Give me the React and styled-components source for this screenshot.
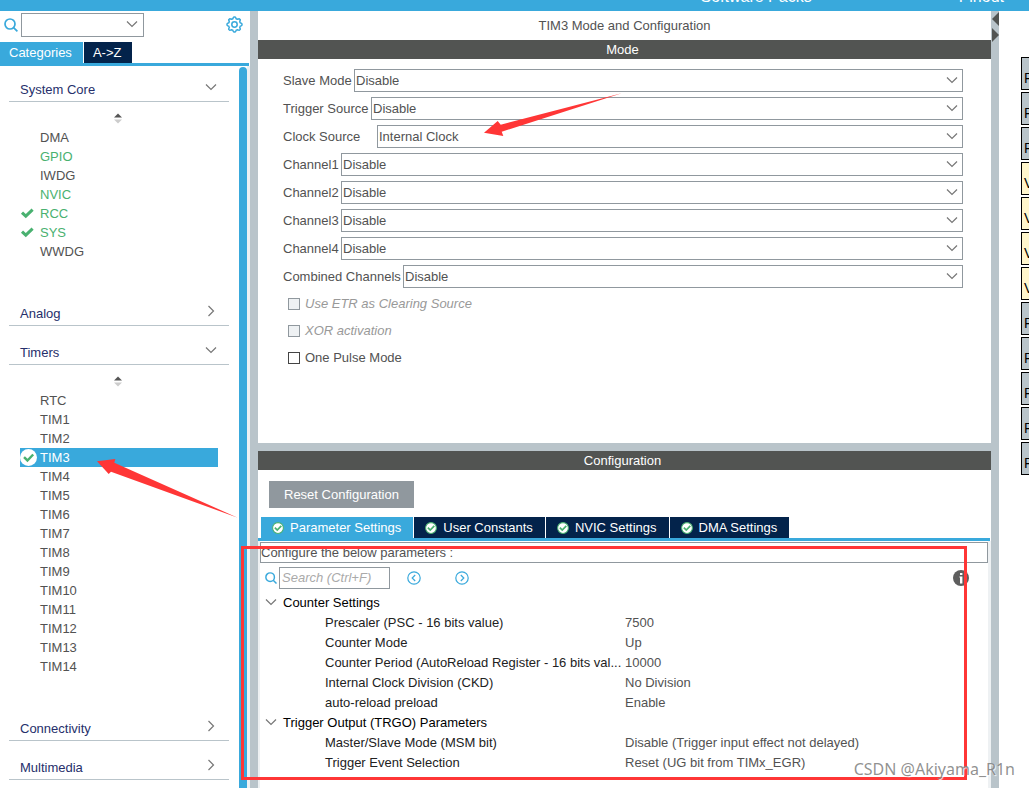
import React from 'react';
import styled, { createGlobalStyle, css, ThemeProvider } from 'styled-components';

const theme = {
  blue: '#39a9dc',
  navy: '#03234b',
  steel: '#b9c4ca',
  slate: '#90989e',
  dark: '#525452',
  text: '#525252',
  section: '#262f6b',
  green: '#49b170',
  pale: '#eef1f3',
  red: '#ff3636',
};

const GlobalStyle = createGlobalStyle`
  * {
    box-sizing: border-box;
  }

  body {
    margin: 0;
    background: #fff;
    color: ${theme.text};
    font: 13px/19px 'Liberation Sans', Arial, sans-serif;
  }

  button,
  input,
  select {
    font: inherit;
    color: inherit;
    margin: 0;
  }
`;

const Page = styled.div`
  position: relative;
  display: flex;
  flex-direction: column;
  height: 100vh;
  overflow: hidden;
`;

const ButtonReset = styled.button`
  border: 0;
  padding: 0;
  background: transparent;
  cursor: pointer;
  display: flex;
  align-items: center;
`;

const TopBar = styled.header`
  display: flex;
  flex: none;
  justify-content: flex-end;
  align-items: flex-end;
  gap: 127px;
  height: 11px;
  padding: 0 25px 4px 0;
  overflow: hidden;
  background: ${({ theme }) => theme.blue};
`;

const TopMenu = styled(ButtonReset)`
  gap: 10px;
  color: #fff;
  font-size: 16px;
  line-height: 20px;
`;

const Workspace = styled.div`
  display: flex;
  flex: 1;
  min-height: 0;
`;

const Sidebar = styled.aside`
  display: flex;
  flex-direction: column;
  flex: none;
  width: 250px;
`;

const Finder = styled.div`
  display: flex;
  align-items: center;
  height: 31px;
  padding: 0 7px 4px 4px;
  gap: 3px;

  > :last-child {
    margin-left: auto;
  }
`;

const TabList = styled.div`
  display: flex;
  gap: 1px;
  border-bottom: 3px solid ${({ theme }) => theme.blue};
  margin-right: 1px;
  padding-left: ${({ $indent }) => $indent || 0}px;
`;

const Tab = styled(ButtonReset)`
  height: 21px;
  gap: 6px;
  padding: ${({ $wide }) => ($wide ? '0 12px 0 11px' : '0 11px 0 9px')};
  color: #fff;
  background: ${({ theme, $active }) => ($active ? theme.blue : theme.navy)};
`;

const SidebarBody = styled.div`
  display: flex;
  flex: 1;
  min-height: 0;
  background: #fff;
`;

const Nav = styled.nav`
  display: flex;
  flex-direction: column;
  flex: 1;
  gap: 3px;
  overflow: hidden;
`;

const ScrollThumb = styled.div`
  width: 8px;
  margin-top: 1px;
  border-radius: 4px 4px 0 0;
  background: ${({ theme }) => theme.blue};
`;

const ScrollEdge = styled.div`
  width: 3px;
  background: ${({ theme }) => theme.pale};
`;

const SectionHeader = styled(ButtonReset)`
  justify-content: space-between;
  width: 220px;
  height: 36px;
  margin-left: 9px;
  padding: 12px 12px 0 11px;
  border-bottom: 1px solid ${({ theme }) => theme.steel};
  color: ${({ theme }) => theme.section};

  svg {
    margin-bottom: 6px;
  }
`;

const Sorter = styled.div`
  display: flex;
  justify-content: center;
  align-items: center;
  height: 26px;
  padding: 6px 3px 0 0;
`;

const List = styled.ul`
  list-style: none;
  margin: 0;
  padding: 0 21px 26px 20px;
`;

const Item = styled.li`
  display: flex;
  align-items: center;
  height: 19px;
  color: ${({ theme, $enabled }) => ($enabled ? theme.green : theme.text)};

  ${({ $selected, theme }) =>
    $selected &&
    css`
      color: #fff;
      background: ${theme.blue};
    `}
`;

const ItemMark = styled.span`
  display: flex;
  width: 20px;
`;

const Splitter = styled.div`
  flex: none;
  width: 8px;
  height: ${({ $horizontal }) => ($horizontal ? '8px' : 'auto')};
  background: ${({ theme }) => theme.steel};

  ${({ $horizontal }) =>
    $horizontal &&
    css`
      width: auto;
    `}

  svg {
    display: block;
  }
`;

const Main = styled.main`
  display: flex;
  flex-direction: column;
  flex: 1;
  min-width: 0;
`;

const Title = styled.h1`
  margin: 0;
  font-size: 13px;
  font-weight: 400;
  line-height: 29px;
  text-align: center;
`;

const PanelHeader = styled.h2`
  margin: 0;
  padding-right: 4px;
  font-size: 13px;
  font-weight: 400;
  line-height: 19px;
  text-align: center;
  color: #fff;
  background: ${({ theme }) => theme.dark};
`;

const ModeForm = styled.form`
  display: flex;
  flex-direction: column;
  gap: 5px;
  padding: 10px 28px 72px 25px;
`;

const ModeRow = styled.div`
  display: flex;
  align-items: center;
`;

const ModeLabel = styled.label`
  flex: none;
  width: ${({ $width }) => $width}px;
  white-space: nowrap;
`;

const SelectBox = styled.span`
  display: grid;
  flex: ${({ $width }) => ($width ? 'none' : 1)};
  width: ${({ $width }) => ($width ? `${$width}px` : 'auto')};
  align-items: center;

  > * {
    grid-area: 1 / 1;
  }

  svg {
    justify-self: end;
    margin-right: ${({ $width }) => ($width ? 6 : 5)}px;
    margin-bottom: 1px;
    pointer-events: none;
  }
`;

const Select = styled.select`
  appearance: none;
  width: 100%;
  height: ${({ $tall }) => ($tall ? 24 : 23)}px;
  padding: 0 20px 0 1px;
  border: 1px solid ${({ theme }) => theme.slate};
  border-radius: 0;
  background: #fff;
`;

const Checks = styled.div`
  display: flex;
  flex-direction: column;
  margin-top: -3px;
  padding-left: 5px;
`;

const Check = styled.label`
  display: flex;
  align-items: center;
  gap: 5px;
  height: 27px;

  ${({ $disabled }) =>
    $disabled &&
    css`
      color: #999;
      font-style: italic;
    `}

  input {
    appearance: none;
    width: 12px;
    height: 12px;
    border: 1px solid #444;
    background: #fff;
  }

  input:disabled {
    border-color: ${({ theme }) => theme.slate};
    background: ${({ theme }) => theme.pale};
  }
`;

const Actions = styled.div`
  display: flex;
  padding: 11px 11px 9px;
`;

const ResetButton = styled(ButtonReset)`
  height: 27px;
  padding: 0 15px;
  color: #fff;
  background: ${({ theme }) => theme.slate};
`;

const Config = styled.section`
  display: flex;
  flex-direction: column;
  flex: 1;
  min-height: 0;
`;

const Params = styled.div`
  flex: 1;
  padding-top: 1px;
  border: solid ${({ theme }) => theme.pale};
  border-width: 0 3px 0 2px;
`;

const Hint = styled.p`
  margin: 0;
  height: 21px;
  border: 1px solid ${({ theme }) => theme.slate};
`;

const Tools = styled.div`
  display: flex;
  align-items: center;
  height: 29px;
  padding: 0 19px 0 5px;
`;

const SearchInput = styled.input`
  width: 111px;
  height: 22px;
  margin: 0 17px 0 2px;
  padding: 0 2px;
  border: 1px solid ${({ theme }) => theme.slate};
  background: #fff;

  &::placeholder {
    color: #aaa;
    font-style: italic;
    opacity: 1;
  }
`;

const Stepper = styled.div`
  display: flex;
  gap: 34px;
  margin-right: auto;
`;

const ParamTable = styled.table`
  width: 100%;
  table-layout: fixed;
  border-collapse: collapse;

  th,
  td {
    height: 20px;
    padding: 0;
    font-weight: 400;
    text-align: left;
    white-space: nowrap;
  }
`;

const NameColumn = styled.col`
  width: 365px;
`;

const GroupButton = styled(ButtonReset)`
  gap: 6px;
  padding-left: 5px;
  color: #000;
`;

const ParamName = styled.span`
  padding-left: 65px;
  color: #222;
`;

const PinView = styled.div`
  flex: none;
  width: 30px;
  padding: 46px 0 0 22px;
  overflow: hidden;
`;

const Pin = styled.div`
  display: flex;
  align-items: flex-end;
  width: 60px;
  height: 33px;
  margin-bottom: 2px;
  padding: 0 0 3px 2px;
  border: 1px solid #000;
  color: #000;
  font-size: 14px;
  line-height: 16px;
  background: ${({ theme, $power }) => ($power ? '#fff6cc' : theme.steel)};
`;

/* Markup drawn over the window */
const Callout = styled.div`
  position: absolute;
  left: 241px;
  top: 546px;
  width: 726px;
  height: 234px;
  border: 3px solid ${({ theme }) => theme.red};
  pointer-events: none;
`;

const Arrows = styled.svg`
  position: absolute;
  left: 0;
  top: 0;
  fill: ${({ theme }) => theme.red};
  pointer-events: none;
`;

const Watermark = styled.div`
  position: absolute;
  right: 14px;
  bottom: 8px;
  font: 16px/22px 'Noto Sans', 'Open Sans', sans-serif;
  color: rgba(125, 125, 125, 0.85);
  text-shadow: 1px 1px 1px rgba(255, 255, 255, 0.9);
  pointer-events: none;
`;

const Chevron = ({ right, color = '#777', size = 12 }) => (
  <svg width={size} height={size} viewBox="0 0 12 12" fill="none" stroke={color} strokeWidth="1.2">
    <path d={right ? 'M3.5 1L8.5 6L3.5 11' : 'M1 3.5L6 8.5L11 3.5'} />
  </svg>
);

const SearchIcon = ({ size }) => (
  <svg width={size} height={size} viewBox="0 0 14 14" fill="none" stroke={theme.blue} strokeWidth="1.7">
    <circle cx="6" cy="6" r="5" />
    <path d="M9.6 9.6L13.4 13.4" />
  </svg>
);

const gearPoints = Array.from({ length: 64 }, (_, i) => {
  const angle = (i / 64) * Math.PI * 2;
  const radius = 6.7 + 0.8 * Math.tanh(3 * Math.cos(angle * 8));
  return `${(8.5 + radius * Math.cos(angle)).toFixed(2)},${(8.5 + radius * Math.sin(angle)).toFixed(2)}`;
}).join(' ');

const GearIcon = () => (
  <svg width="17" height="17" viewBox="0 0 17 17" fill="none" stroke={theme.blue} strokeWidth="1.5">
    <polygon points={gearPoints} strokeLinejoin="round" />
    <circle cx="8.5" cy="8.5" r="2.7" />
  </svg>
);

const SortIcon = () => (
  <svg width="8" height="11" viewBox="0 0 8 11">
    <path d="M0 4.5L4 0.5L8 4.5Z" fill="#555" />
    <path d="M0 6.5L4 10.5L8 6.5Z" fill="#ccc" />
  </svg>
);

const TickIcon = () => (
  <svg width="14" height="11" viewBox="0 0 14 11" fill="none" stroke={theme.green} strokeWidth="3">
    <path d="M2 4.6L5.8 8.2L12.6 1.6" />
  </svg>
);

const TickBadge = ({ size, ring }) => (
  <svg width={size} height={size} viewBox="0 0 16 16" fill="none" stroke={theme.green}>
    <circle cx="8" cy="8" r={ring ? 7.2 : 8} fill="#fff" strokeWidth={ring ? 1.4 : 0} />
    <path d="M3.8 7.6L7 10.8L12.4 5.2" strokeWidth="2.3" />
  </svg>
);

const StepIcon = ({ next }) => (
  <svg width="14" height="14" viewBox="0 0 14 14" fill="none" stroke={theme.blue} strokeWidth="1.2">
    <circle cx="7" cy="7" r="6.2" />
    <path d={next ? 'M5.8 4L8.8 7L5.8 10' : 'M8.2 4L5.2 7L8.2 10'} />
  </svg>
);

const InfoIcon = () => (
  <svg width="16" height="16" viewBox="0 0 16 16">
    <circle cx="8" cy="8" r="8" fill="#5e5e5e" />
    <path d="M7 3h2.4v2H7zM6.4 6.4h3v7H7V7.6h-.6z" fill="#fff" />
  </svg>
);

const sections = [
  {
    name: 'System Core',
    items: [
      { name: 'DMA' },
      { name: 'GPIO', enabled: true },
      { name: 'IWDG' },
      { name: 'NVIC', enabled: true },
      { name: 'RCC', enabled: true, ticked: true },
      { name: 'SYS', enabled: true, ticked: true },
      { name: 'WWDG' },
    ],
  },
  { name: 'Analog' },
  {
    name: 'Timers',
    items: [
      { name: 'RTC' },
      { name: 'TIM1' },
      { name: 'TIM2' },
      { name: 'TIM3', selected: true },
      { name: 'TIM4' },
      { name: 'TIM5' },
      { name: 'TIM6' },
      { name: 'TIM7' },
      { name: 'TIM8' },
      { name: 'TIM9' },
      { name: 'TIM10' },
      { name: 'TIM11' },
      { name: 'TIM12' },
      { name: 'TIM13' },
      { name: 'TIM14' },
    ],
  },
  { name: 'Connectivity' },
  { name: 'Multimedia' },
];

const modes = [
  { label: 'Slave Mode', value: 'Disable', width: 71 },
  { label: 'Trigger Source', value: 'Disable', width: 88 },
  { label: 'Clock Source', value: 'Internal Clock', width: 94 },
  { label: 'Channel1', value: 'Disable', width: 58 },
  { label: 'Channel2', value: 'Disable', width: 58 },
  { label: 'Channel3', value: 'Disable', width: 58 },
  { label: 'Channel4', value: 'Disable', width: 58 },
  { label: 'Combined Channels', value: 'Disable', width: 120 },
];

const checks = [
  { label: 'Use ETR as Clearing Source', disabled: true },
  { label: 'XOR activation', disabled: true },
  { label: 'One Pulse Mode' },
];

const configTabs = ['Parameter Settings', 'User Constants', 'NVIC Settings', 'DMA Settings'];

const groups = [
  {
    name: 'Counter Settings',
    params: [
      ['Prescaler (PSC - 16 bits value)', '7500'],
      ['Counter Mode', 'Up'],
      ['Counter Period (AutoReload Register - 16 bits val...', '10000'],
      ['Internal Clock Division (CKD)', 'No Division'],
      ['auto-reload preload', 'Enable'],
    ],
  },
  {
    name: 'Trigger Output (TRGO) Parameters',
    params: [
      ['Master/Slave Mode (MSM bit)', 'Disable (Trigger input effect not delayed)'],
      ['Trigger Event Selection', 'Reset (UG bit from TIMx_EGR)'],
    ],
  },
];

const pins = 'PPPVVVVPPPPP'.split('');

const Section = ({ name, items }) => (
  <div>
    <SectionHeader aria-expanded={Boolean(items)}>
      {name}
      <Chevron right={!items} />
    </SectionHeader>
    {items && (
      <>
        <Sorter>
          <SortIcon />
        </Sorter>
        <List>
          {items.map(item => (
            <Item key={item.name} $enabled={item.enabled} $selected={item.selected}>
              <ItemMark>
                {item.ticked && <TickIcon />}
                {item.selected && <TickBadge size={17} />}
              </ItemMark>
              {item.name}
            </Item>
          ))}
        </List>
      </>
    )}
  </div>
);

const ModeField = ({ label, value, width }) => (
  <ModeRow>
    <ModeLabel htmlFor={label} $width={width}>
      {label}
    </ModeLabel>
    <SelectBox>
      <Select id={label} defaultValue={value}>
        <option>{value}</option>
      </Select>
      <Chevron />
    </SelectBox>
  </ModeRow>
);

export default function App() {
  return (
    <ThemeProvider theme={theme}>
      <GlobalStyle />
      <Page>
        <TopBar>
          <TopMenu>
            <Chevron color="#fff" size={10} />
            Software Packs
          </TopMenu>
          <TopMenu>
            <Chevron color="#fff" size={10} />
            Pinout
          </TopMenu>
        </TopBar>

        <Workspace>
          <Sidebar>
            <Finder>
              <SearchIcon size={14} />
              <SelectBox $width={123}>
                <Select $tall aria-label="Find peripheral">
                  <option></option>
                </Select>
                <Chevron />
              </SelectBox>
              <ButtonReset aria-label="Settings">
                <GearIcon />
              </ButtonReset>
            </Finder>
            <TabList>
              <Tab $active>Categories</Tab>
              <Tab>{'A->Z'}</Tab>
            </TabList>
            <SidebarBody>
              <Nav>
                {sections.map(section => (
                  <Section key={section.name} {...section} />
                ))}
              </Nav>
              <ScrollThumb />
              <ScrollEdge />
            </SidebarBody>
          </Sidebar>

          <Splitter />

          <Main>
            <section>
              <Title>TIM3 Mode and Configuration</Title>
              <PanelHeader>Mode</PanelHeader>
              <ModeForm>
                {modes.map(mode => (
                  <ModeField key={mode.label} {...mode} />
                ))}
                <Checks>
                  {checks.map(({ label, disabled }) => (
                    <Check key={label} $disabled={disabled}>
                      <input type="checkbox" disabled={disabled} />
                      {label}
                    </Check>
                  ))}
                </Checks>
              </ModeForm>
            </section>

            <Splitter $horizontal />

            <Config>
              <PanelHeader>Configuration</PanelHeader>
              <Actions>
                <ResetButton>Reset Configuration</ResetButton>
              </Actions>
              <TabList $indent={3}>
                {configTabs.map((tab, i) => (
                  <Tab key={tab} $wide $active={i === 0}>
                    <TickBadge size={12} ring />
                    {tab}
                  </Tab>
                ))}
              </TabList>
              <Params>
                <Hint>Configure the below parameters :</Hint>
                <Tools>
                  <SearchIcon size={12} />
                  <SearchInput aria-label="Search" placeholder="Search (Ctrl+F)" />
                  <Stepper>
                    <ButtonReset aria-label="Previous">
                      <StepIcon />
                    </ButtonReset>
                    <ButtonReset aria-label="Next">
                      <StepIcon next />
                    </ButtonReset>
                  </Stepper>
                  <ButtonReset aria-label="Information">
                    <InfoIcon />
                  </ButtonReset>
                </Tools>
                <ParamTable>
                  <colgroup>
                    <NameColumn />
                    <col />
                  </colgroup>
                  {groups.map(group => (
                    <tbody key={group.name}>
                      <tr>
                        <th colSpan={2}>
                          <GroupButton>
                            <Chevron />
                            {group.name}
                          </GroupButton>
                        </th>
                      </tr>
                      {group.params.map(([name, value]) => (
                        <tr key={name}>
                          <td>
                            <ParamName>{name}</ParamName>
                          </td>
                          <td>{value}</td>
                        </tr>
                      ))}
                    </tbody>
                  ))}
                </ParamTable>
              </Params>
            </Config>
          </Main>

          <Splitter>
            <svg width="8" height="32" viewBox="0 0 8 32" fill="#525452">
              <path d="M8 1V15L1 8Z" />
              <path d="M1 17V31L8 24Z" />
            </svg>
          </Splitter>

          <PinView>
            {pins.map((pin, i) => (
              <Pin key={i} $power={pin === 'V'}>
                {pin}
              </Pin>
            ))}
          </PinView>
        </Workspace>

        <Callout />
        <Arrows width="640" height="530" viewBox="0 0 640 530">
          <path d="M484 132.7L497.7 121L500.7 124.7L621.7 93.3L501.7 131.7L503.3 136Z" />
          <path d="M97 461.3L115.3 459L114.3 462.7L237.7 517.7L111 471.7L108.7 474Z" />
        </Arrows>
        <Watermark>CSDN @Akiyama_R1n</Watermark>
      </Page>
    </ThemeProvider>
  );
}
